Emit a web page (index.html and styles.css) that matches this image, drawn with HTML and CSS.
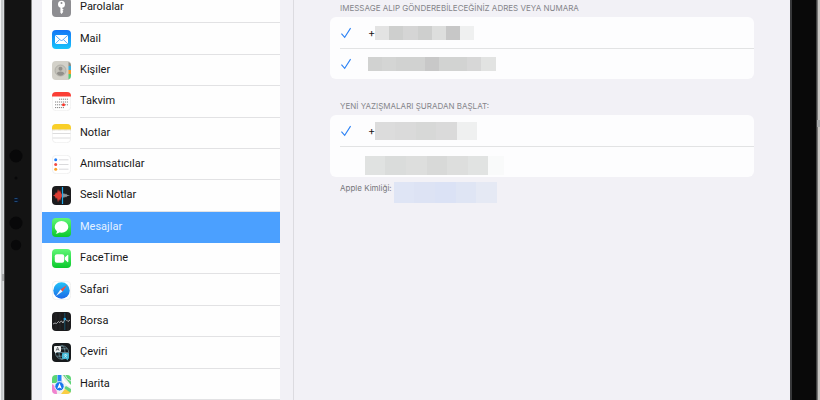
FILE: index.html
```html
<!DOCTYPE html>
<html lang="tr">
<head>
<meta charset="utf-8">
<meta name="viewport" content="width=device-width, initial-scale=1">
<title>Ayarlar – Mesajlar</title>
<link rel="stylesheet" href="styles.css">
</head>
<body>
<div class="tablet">
  <div class="edge edge-left"><span class="side-button"></span></div>
  <div class="bezel bezel-left">
    <svg class="sensors" width="26" height="104" viewBox="0 0 26 104" aria-hidden="true">
      <g fill="#080809"><circle cx="11" cy="7" r="6.5"/><circle cx="11" cy="29" r="1.5"/><circle cx="11" cy="74" r="6.5"/><circle cx="11" cy="96" r="5.2"/></g>
      <circle cx="11.500" cy="51" r="3" fill="#0b1525"/><path d="M9.500 49.500h3M9.500 52.500h3" stroke="#214a78" stroke-width="1"/>
    </svg>
  </div>
  <div class="screen">
    <nav class="sidebar" aria-label="Ayarlar">
      <ul class="apps">
        <li><a class="app" href="#parolalar">
          <svg class="icon" viewBox="0 0 19 19"><rect width="19" height="19" rx="4" fill="#8d8d91"/><circle cx="9.500" cy="6.200" r="3.500" fill="#fff"/><circle cx="9.500" cy="5" r="1" fill="#8d8d91"/><path d="M8.400 8h2v2.800l1.300 1-1.300 1 .9 1-1.700 2.200-1.200-1.300z" fill="#fff"/></svg>
          <span class="name">Parolalar</span></a></li>
        <li><a class="app" href="#mail">
          <svg class="icon" viewBox="0 0 19 19"><defs><linearGradient id="mail" x2="0" y2="1"><stop stop-color="#1475f6"/><stop offset="1" stop-color="#17c4fb"/></linearGradient></defs><rect width="19" height="19" rx="4" fill="url(#mail)"/><rect x="3" y="5" width="13" height="9" rx="1.400" fill="#fff"/><path d="M3.500 5.500 8.300 10q1.200 1 2.400 0l4.800-4.500M3.600 13.500l4-4M15.400 13.500l-4-4" fill="none" stroke="#2b93f8" stroke-width=".8"/></svg>
          <span class="name">Mail</span></a></li>
        <li><a class="app" href="#kisiler">
          <svg class="icon" viewBox="0 0 19 19"><rect width="19" height="19" rx="4" fill="#d3d1c9"/><path d="M16.500 1q2.500 1 2.500 3v1h-2.500z" fill="#8d9089"/><path d="M16.500 5H19v4h-2.500z" fill="#35afe0"/><path d="M16.500 9H19v4h-2.500z" fill="#f39b2d"/><path d="M16.500 13H19v2q0 2-2.500 3.500z" fill="#55cb72"/><circle cx="8.500" cy="9.500" r="5.500" fill="#c4c2ba" stroke="#aaa8a1" stroke-width=".8"/><circle cx="8.500" cy="7.700" r="2" fill="#92908b"/><path d="M4.800 12.800q.5-2.300 3.700-2.300t3.700 2.300q-3.700 3.700-7.400 0" fill="#92908b"/></svg>
          <span class="name">Kişiler</span></a></li>
        <li><a class="app" href="#takvim">
          <svg class="icon" viewBox="0 0 19 19"><rect x=".3" y=".3" width="18.400" height="18.400" rx="4" fill="#fff" stroke="#e8e8e8" stroke-width=".6"/><path d="M0 4.500V4q0-4 4-4h11q4 0 4 4v.5z" fill="#fb3f36"/><g stroke="#747474" stroke-width=".9" stroke-dasharray="1.200 .8"><path d="M7 7.200h9M3 10h13M3 12.800h13M3 15.600h9"/></g><circle cx="11.500" cy="12.800" r="1.500" fill="#fb3429"/></svg>
          <span class="name">Takvim</span></a></li>
        <li><a class="app" href="#notlar">
          <svg class="icon" viewBox="0 0 19 19"><rect x=".3" y=".3" width="18.400" height="18.400" rx="4" fill="#fff" stroke="#e5e5e5" stroke-width=".6"/><path d="M0 5.500V4q0-4 4-4h11q4 0 4 4v1.500z" fill="#f9cf28"/><path d="M0 6h19" stroke="#b7af91" stroke-width=".7" stroke-dasharray=".6 .6"/><path d="M.5 9.500h18M.5 14h18" stroke="#d4d4d6" stroke-width=".8"/></svg>
          <span class="name">Notlar</span></a></li>
        <li><a class="app" href="#animsaticilar">
          <svg class="icon" viewBox="0 0 19 19"><rect x=".3" y=".3" width="18.400" height="18.400" rx="4" fill="#fff" stroke="#e5e5e5" stroke-width=".6"/><path d="M7 4.800h9.500M7 9.500h9.500M7 14.200h9.500" stroke="#d0d0d3" stroke-width=".8"/><circle cx="3.700" cy="4.800" r="1.500" fill="#217ff7"/><circle cx="3.700" cy="9.500" r="1.500" fill="#f34c43"/><circle cx="3.700" cy="14.200" r="1.500" fill="#fba127"/></svg>
          <span class="name">Anımsatıcılar</span></a></li>
        <li><a class="app" href="#sesli-notlar">
          <svg class="icon" viewBox="0 0 19 19"><rect width="19" height="19" rx="4" fill="#1b1b1d"/><path d="M1 9.500l2-1 1-2.500 1 1.500L6 3l1 3 1-2 1 3 1 1.500v2L9 12l-1 3-1-2-1 3.500-1-5-1 1.500-1-2.500z" fill="#dc3c33"/><path d="M11 8l1-1 1 1.500 1-1 1 1.300 3 .7-3 .7-1 1.300-1-1-1 1.500-1-1z" fill="#8c9297"/><path d="M10.500 1v17" stroke="#22a8e8" stroke-width="1.200"/></svg>
          <span class="name">Sesli Notlar</span></a></li>
        <li><a class="app selected" href="#mesajlar" aria-current="page">
          <svg class="icon" viewBox="0 0 19 19"><defs><linearGradient id="green" x2="0" y2="1"><stop stop-color="#60f777"/><stop offset="1" stop-color="#0bc92c"/></linearGradient></defs><rect width="19" height="19" rx="4" fill="url(#green)"/><ellipse cx="9.500" cy="8.900" rx="6.800" ry="5.800" fill="#fff"/><path d="M5 12.500q.4 2-1.300 3.200 2.500.1 4-1.800z" fill="#fff"/></svg>
          <span class="name">Mesajlar</span></a></li>
        <li><a class="app" href="#facetime">
          <svg class="icon" viewBox="0 0 19 19"><rect width="19" height="19" rx="4" fill="url(#green)"/><rect x="2.800" y="5.300" width="9.400" height="8.400" rx="2" fill="#fff"/><path d="M12.800 8.500 15.500 6q.8-.5.800.5v6q0 1-.8.500l-2.700-2.500z" fill="#fff"/></svg>
          <span class="name">FaceTime</span></a></li>
        <li><a class="app" href="#safari">
          <svg class="icon" viewBox="0 0 19 19"><defs><linearGradient id="safari" x2="0" y2="1"><stop stop-color="#22c2f7"/><stop offset="1" stop-color="#1c69e8"/></linearGradient></defs><rect x=".3" y=".3" width="18.400" height="18.400" rx="4" fill="#fff" stroke="#e5e5e5" stroke-width=".6"/><circle cx="9.500" cy="9.500" r="8.200" fill="url(#safari)"/><path d="M15 4l-4.500 6.500-2-2z" fill="#f44b3f"/><path d="M4 15l6.500-4.500-2-2z" fill="#eff5fc"/></svg>
          <span class="name">Safari</span></a></li>
        <li><a class="app" href="#borsa">
          <svg class="icon" viewBox="0 0 19 19"><rect width="19" height="19" rx="4" fill="#1b1b1d"/><path d="M4 1v17M8 1v17M16 1v17" stroke="#333336" stroke-width=".5"/><path d="M12.800 1v17" stroke="#175f80" stroke-width=".8"/><path d="M1 12l2-1 1.500.5 2-2 1 1 2-1.500 1.500 2 2-4 1.500 1 1.500 1.500L18 8" fill="none" stroke="#c6c9cc" stroke-width=".8"/><circle cx="12.800" cy="7" r="1.300" fill="#27aef0"/></svg>
          <span class="name">Borsa</span></a></li>
        <li><a class="app" href="#ceviri">
          <svg class="icon" viewBox="0 0 19 19"><rect width="19" height="19" rx="4" fill="#171a1c"/><g fill="none" stroke="#779eaa" stroke-width=".7"><circle cx="10" cy="9.500" r="6.700"/><ellipse cx="10" cy="9.500" rx="3" ry="6.700"/><path d="M3.500 9.500h13M5 5.800h10M5 13.200h10"/></g><path d="M3 3h5q1 0 1 1v4q0 1-1 1H5l-2 1.500V9q-1 0-1-1V4q0-1 1-1z" fill="#f1f3f3"/><path d="M4.100 7.700 5.600 4.200l1.500 3.500M4.600 6.600h2" fill="none" stroke="#30373a" stroke-width=".6"/><path d="M11 10h5q1 0 1 1v4q0 1-1 1v1.500L14 16h-3q-1 0-1-1v-4q0-1 1-1z" fill="#43b7d4"/><path d="M11.700 12h3.600M13.500 11v1M12.200 14.700l2.500-2.500M12.500 12.700l2.400 2" fill="none" stroke="#e4f7fb" stroke-width=".6"/></svg>
          <span class="name">Çeviri</span></a></li>
        <li><a class="app" href="#harita">
          <svg class="icon" viewBox="0 0 19 19"><defs><clipPath id="tile"><rect width="19" height="19" rx="4"/></clipPath></defs><g clip-path="url(#tile)"><path d="M0 0h19v19H0z" fill="#eff0ed"/><path d="M0 0h5v8H0z" fill="#5cd675"/><path d="M11 0h8v10z" fill="#5cd675"/><path d="M9 0q2 8 10 11" fill="none" stroke="#fff" stroke-width="1.500"/><path d="M13 0q1 4 6 6" fill="none" stroke="#d6dde0"/><path d="M0 9q5 2 5 10H0z" fill="#f183cf"/><path d="M9 19l4-5 6 2v3z" fill="#f9ce43"/><path d="M12 13l2-2 5 3v4z" fill="#62d47b"/><path d="M5.500 0h4v8h-4z" fill="#2584f5"/><circle cx="7.500" cy="11.300" r="4.700" fill="#1975ee" stroke="#fff" stroke-width=".9"/><path d="M7.500 8.100l2.300 5.700-2.300-1.300-2.300 1.300z" fill="#fff"/></g></svg>
          <span class="name">Harita</span></a></li>
      </ul>
    </nav>
    <main class="detail">
      <section class="group">
        <h2 class="heading">IMESSAGE ALIP GÖNDEREBİLECEĞİNİZ ADRES VEYA NUMARA</h2>
        <div class="card">
          <label class="option"><input class="choice" type="checkbox" aria-label="Telefon numarası" checked><svg class="check" viewBox="0 0 10 11"><path d="M.8 6 3.800 9.500 9.200 1"/></svg><span class="value">+<span class="redacted phone-a"></span></span></label>
          <label class="option"><input class="choice" type="checkbox" aria-label="E-posta adresi" checked><svg class="check" viewBox="0 0 10 11"><path d="M.8 6 3.800 9.500 9.200 1"/></svg><span class="value"><span class="redacted mail-a"></span></span></label>
        </div>
      </section>
      <section class="group">
        <h2 class="heading">YENİ YAZIŞMALARI ŞURADAN BAŞLAT:</h2>
        <div class="card">
          <label class="option"><input class="choice" type="radio" name="start" aria-label="Telefon numarası" checked><svg class="check" viewBox="0 0 10 11"><path d="M.8 6 3.800 9.500 9.200 1"/></svg><span class="value">+<span class="redacted phone-b"></span></span></label>
          <label class="option"><input class="choice" type="radio" name="start" aria-label="E-posta adresi"><svg class="check" viewBox="0 0 10 11"><path d="M.8 6 3.800 9.500 9.200 1"/></svg><span class="value value-low"><span class="redacted mail-b"></span></span></label>
        </div>
        <p class="footnote">Apple Kimliği: <span class="redacted apple-id"></span></p>
      </section>
    </main>
  </div>
  <div class="bezel bezel-right"></div>
  <div class="edge edge-right"><span class="side-button"></span></div>
</div>
</body>
</html>
```

FILE: styles.css
```css
* { box-sizing: border-box; }
body { margin: 0; overflow: hidden; font-family: Inter, "Liberation Sans", sans-serif; color: #161616; }
.tablet { display: flex; height: 100vh; overflow: hidden; background: #f2f1f6; }

.edge { flex: none; }
.edge-left { width: 4px; padding-top: 274px; background: linear-gradient(90deg, #f4f5f5 1px, #c7cacb 1px 3px, #d8dbdc 3px); }
.edge-right { width: 3px; padding-top: 120px; background: linear-gradient(90deg, #777675 1px, #c8c5c2 1px); }
.side-button { display: block; height: 7px; background: #a5a7a8; }
.edge-left .side-button { margin-left: 2px; }
.bezel { flex: none; }
.bezel-left { width: 28px; padding-top: 149px; background: #131313; border-left: 1px solid #484848; border-right: 1px solid #858585; }
.bezel-right { width: 27px; background: #090909; border-left: 2px solid #37383a; border-right: 1px solid #414141; }
.sensors { display: block; }

.screen { flex: 1; min-width: 0; display: flex; }
.sidebar { flex: none; width: 262px; padding: 0 13px 0 10px; border-right: 1px solid #dcdbe0; }
.apps { list-style: none; margin: -8px 0 0; padding: 0; display: grid; grid-template-rows: repeat(13, 1fr); min-height: 408px; background: #fefefe; }
.apps li { display: grid; }
.app { display: grid; grid-template-columns: 19px 1fr; column-gap: 9px; padding-left: 10px; align-items: center; color: inherit; text-decoration: none; font-family: Roboto, "Liberation Sans", sans-serif; font-size: 11px; line-height: 16px; }
.icon { display: block; width: 19px; height: 19px; }
.name { display: flex; align-items: center; height: 100%; border-bottom: 1px solid #e2e2e4; }
.selected { background: #4ba0ff; color: #e6f2ff; }
.selected .name { border-color: transparent; }

.detail { flex: 1; min-width: 0; padding: 3px 36px 0; }
.group + .group { margin-top: 22px; }
.heading { margin: 0 0 4px; padding-left: 10px; font-size: 8px; line-height: 10px; font-weight: 400; color: #85858a; }
.card { background: #fdfdfe; border-radius: 6px; }
.option { display: grid; grid-template-columns: 12px 1fr; column-gap: 16px; align-items: center; height: 31px; margin-left: 10px; font-size: 11px; }
.option + .option { border-top: 1px solid #e2e3e4; }
.choice { position: absolute; opacity: 0; }
.check { width: 12px; height: 12px; fill: none; stroke: #2c82f5; stroke-width: 1; visibility: hidden; }
.choice:checked + .check { visibility: visible; }
.value { display: flex; align-items: center; }
.value-low { align-self: end; padding-bottom: 2px; }
.redacted { display: block; }
.phone-a { width: 99px; height: 14px; background: linear-gradient(90deg, #e3e3e3 14px, #cecfce 14px 28px, #d5d5d5 28px 43px, #cecfce 43px 57px, #dddedd 57px 71px, #c7c7c7 71px 85px, #eff0f0 85px); }
.mail-a { width: 128px; height: 14px; background: linear-gradient(90deg, #d1d2d1 14px, #d4d5d4 14px 28px, #d1d2d1 28px 57px, #c8c8c8 57px 71px, #d2d3d2 71px 99px, #d7d7d7 99px 113px, #e2e3e2 113px); }
.phone-b { width: 102px; height: 18px; background: linear-gradient(90deg, #dcdcdc 20px, #dadada 20px 41px, #d7d8d7 41px 61px, #dadada 61px 82px, #eff0f0 82px); }
.mail-b { width: 139px; height: 19px; margin-left: -3px; background: linear-gradient(90deg, #e0e2e1 20px, #dadcdb 20px 41px, #dddedd 41px 62px, #d8d9d8 62px 82px, #dddedd 82px 103px, #e1e3e2 103px 123px, #f9fafa 123px); }
.footnote { display: flex; gap: 2px; margin: 5px 0 0; padding-left: 10px; font-size: 8px; line-height: 12px; color: #77777b; }
.apple-id { width: 103px; height: 21px; background: linear-gradient(90deg, #dfe5f5 20px, #dde3f4 20px 41px, #dbe2f5 41px 62px, #dfe5f4 62px 82px, #e5e9f4 82px); }
```
